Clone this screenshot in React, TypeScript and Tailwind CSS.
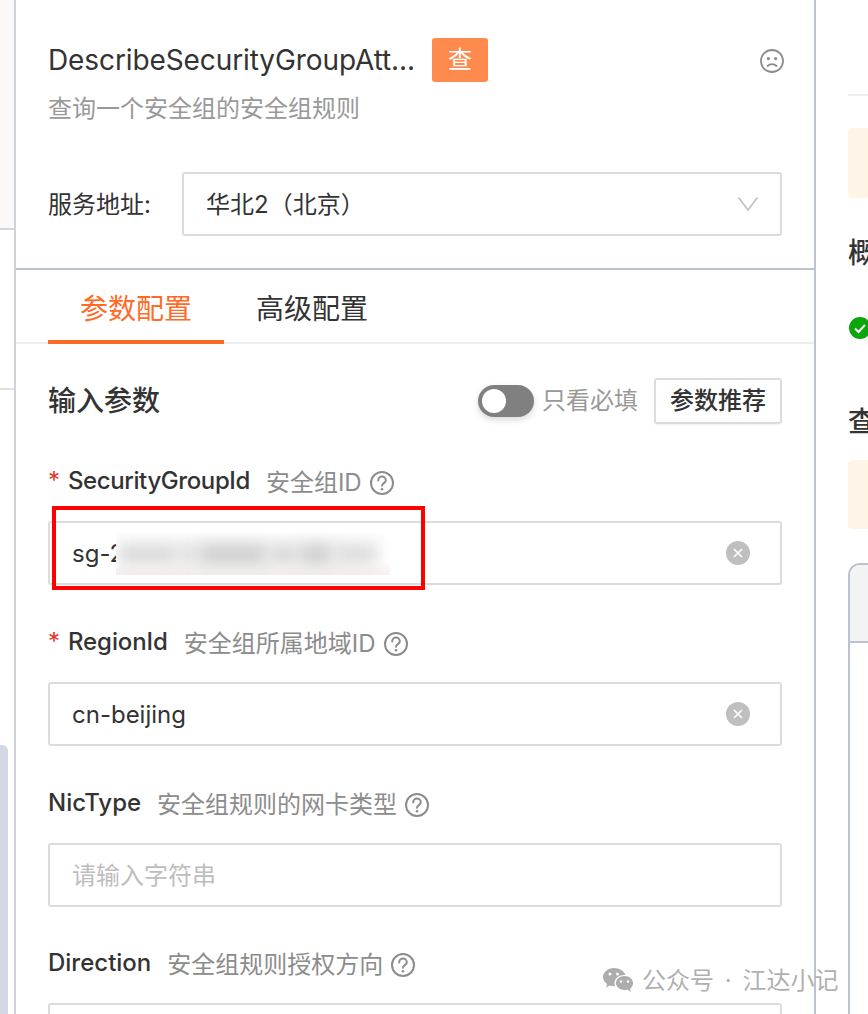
const font = "[font-family:Inter,'Noto_Sans_CJK_SC',sans-serif]";

function HelpIcon() {
  return (
    <svg width="24" height="24" viewBox="0 0 24 24" fill="none" stroke="#8c8c8c" strokeWidth="2" className="shrink-0">
      <circle cx="12" cy="12" r="11" />
      <path d="M8.200 9.400a3.800 3.800 0 0 1 7.600 0c0 2.600-3.800 2.800-3.800 5.400" strokeLinecap="round" />
      <circle cx="12" cy="18.300" r="1.300" fill="#8c8c8c" stroke="none" />
    </svg>
  );
}

function ClearIcon() {
  return (
    <svg width="24" height="24" viewBox="0 0 24 24" className="shrink-0">
      <circle cx="12" cy="12" r="12" fill="#bfbfbf" />
      <path d="M8 8l8 8M16 8l-8 8" stroke="#fff" strokeWidth="1.6" />
    </svg>
  );
}

function Field({ name, desc, required, value, placeholder, blurred, clear, top, nameClass }: any) {
  return (
    <div className={top}>
      <div className="flex h-[40px] items-center">
        {required && <span className="w-[20px] text-[24px] leading-[30px] text-[#e5352b]">*</span>}
        <span className={`text-[24px] font-medium text-[#333] ${nameClass ?? ""}`}>{name}</span>
        <span className="ml-[16px] pt-[3px] text-[24px] text-[#8c8c8c]">{desc}</span>
        <span className="ml-[8px] flex pt-[3px]">
          <HelpIcon />
        </span>
      </div>
      <div className="mt-[20px] flex h-[64px] items-center justify-between rounded-[3px] border-2 border-[#dcdcdc] pl-[22px] pr-[30px]">
        <div className="flex items-center pt-[2px] text-[24px] text-[#333]">
          {value && <span>{value}</span>}
          {placeholder && <span className="text-[#bdbdbd]">{placeholder}</span>}
          {blurred && (
            <div className="-my-[2px] -ml-[8px] flex h-[42px] w-[274px] items-center overflow-hidden bg-[linear-gradient(#ffffff_70%,#f8eeee)] pl-[2px]">
              <div className="h-[22px] w-[60px] bg-[#dadada] blur-[8px]" />
              <div className="h-[22px] w-[20px] bg-[#dedede] blur-[8px]" />
              <div className="h-[24px] w-[70px] bg-[#d0d0d0] blur-[8px]" />
              <div className="h-[22px] w-[30px] bg-[#d8d8d8] blur-[8px]" />
              <div className="h-[24px] w-[36px] bg-[#d0d0d0] blur-[8px]" />
              <div className="h-[22px] w-[44px] bg-[#dcdcdc] blur-[8px]" />
            </div>
          )}
        </div>
        {clear && <ClearIcon />}
      </div>
    </div>
  );
}

export default function App() {
  return (
    <div className={`relative flex h-[1014px] w-[868px] overflow-hidden bg-white ${font}`}>
      {/* left sidebar sliver */}
      <div className="flex w-[16px] shrink-0 flex-col border-r-2 border-[#cfd2d6]">
        <div className="h-[230px] border-b-2 border-[#d4d6da] bg-[#fbf8fa]" />
        <div className="h-[160px] border-b-2 border-[#e0e0e0]" />
        <div className="mt-[355px] h-[269px] w-[8px] rounded-tr-[6px] bg-[#d3d7e3]" />
      </div>

      {/* center panel */}
      <div className="flex w-[800px] shrink-0 flex-col border-r-2 border-[#bcc3cc]">
        <div className="h-[270px] shrink-0 border-b-2 border-[#bcc3cc] px-[32px] pt-[38px]">
          <div className="flex h-[44px] items-center">
            <span className="w-[384px] whitespace-nowrap text-[28px] tracking-[-0.1px] text-[#333]">
              DescribeSecurityGroupAtt...
            </span>
            <span className="flex h-[44px] w-[56px] items-center justify-center rounded-[3px] bg-[#ff8a4d] text-[24px] text-white">
              查
            </span>
            <svg width="24" height="24" viewBox="0 0 24 24" fill="none" stroke="#8c8c8c" strokeWidth="1.8" className="-mr-[2px] ml-auto mt-[2px]">
              <circle cx="12" cy="12" r="11" />
              <circle cx="8.400" cy="9.600" r="1.600" fill="#8c8c8c" stroke="none" />
              <circle cx="15.600" cy="9.600" r="1.600" fill="#8c8c8c" stroke="none" />
              <path d="M7.500 17c2.500-2.400 6.500-2.400 9 0" strokeLinecap="round" />
            </svg>
          </div>
          <div className="mt-[9px] text-[24px] leading-[36px] text-[#999]">查询一个安全组的安全组规则</div>
          <div className="mt-[45px] flex items-center">
            <span className="w-[134px] pt-[2px] text-[24px] text-[#333]">服务地址:</span>
            <div className="flex h-[64px] flex-1 items-center justify-between rounded-[3px] border-2 border-[#dcdcdc] pl-[22px] pr-[22px]">
              <span className="pt-[2px] text-[24px] text-[#333]">华北2（北京）</span>
              <svg width="20" height="14" viewBox="0 0 20 14" fill="none" stroke="#c4c4c4" strokeWidth="1.8">
                <path d="M0.500 0.500L10 13L19.500 0.500" />
              </svg>
            </div>
          </div>
        </div>

        <div className="flex h-[74px] shrink-0 border-b-2 border-[#eeeeee] px-[32px]">
          <div className="-mb-[2px] flex w-[176px] items-center justify-center border-b-4 border-[#ff6a26] pt-[8px] text-[28px] text-[#ff6a26]">
            参数配置
          </div>
          <div className="ml-[32px] flex items-center pt-[6px] text-[28px] text-[#333]">高级配置</div>
        </div>

        <div className="px-[32px] pt-[34px]">
          <div className="flex h-[46px] items-center">
            <span className="text-[28px] font-medium text-[#333]">输入参数</span>
            <div className="relative ml-auto h-[32px] w-[56px] rounded-full bg-[#808080] shadow-[0_3px_6px_rgba(0,0,0,0.15)]">
              <div className="absolute left-[4px] top-[4px] h-[24px] w-[24px] rounded-full bg-white" />
            </div>
            <span className="ml-[8px] text-[24px] text-[#999]">只看必填</span>
            <span className="ml-[16px] flex h-[46px] w-[128px] items-center justify-center rounded-[3px] border-2 border-[#dcdcdc] text-[24px] font-medium text-[#333] shadow-[0_1px_2px_rgba(0,0,0,0.06)]">
              参数推荐
            </span>
          </div>

          <Field top="mt-[37px]" name="SecurityGroupId" nameClass="tracking-[-0.4px]" desc="安全组ID" required value="sg-2" blurred clear />
          <Field top="mt-[37px]" name="RegionId" nameClass="tracking-[-0.1px]" desc="安全组所属地域ID" required value="cn-beijing" clear />
          <Field top="mt-[37px]" name="NicType" desc="安全组规则的网卡类型" placeholder="请输入字符串" />
          <Field top="mt-[36px]" name="Direction" desc="安全组规则授权方向" />
        </div>
      </div>

      {/* right panel */}
      <div className="flex min-w-0 flex-1 flex-col pl-[32px]">
        <div className="h-[96px] shrink-0 border-b-2 border-[#eeeeee]" />
        <div className="mt-[32px] h-[70px] shrink-0 rounded-l-[4px] bg-[#fef5e6]" />
        <div className="mt-[34px] h-[42px] overflow-hidden text-[28px] font-medium leading-[42px] text-[#333]">概览</div>
        <div className="mt-[43px] ml-[1px] h-[22px] w-[19px] shrink-0 overflow-hidden">
          <svg width="22" height="22" viewBox="0 0 22 22">
            <circle cx="11" cy="11" r="11" fill="#0aa60a" />
            <path d="M6 11.500l3.500 3.500 6.500-7" fill="none" stroke="#fff" strokeWidth="2" />
          </svg>
        </div>
        <div className="mt-[62px] h-[42px] overflow-hidden text-[28px] font-medium leading-[42px] text-[#333]">查询</div>
        <div className="mt-[17px] h-[69px] shrink-0 rounded-l-[4px] bg-[#fef5e6]" />
        <div className="mt-[34px] flex-1 -mr-[20px] rounded-tl-[12px] border-l-2 border-t-2 border-[#bcc3cc]">
          <div className="h-[78px] rounded-tl-[10px] border-b-2 border-[#bcc3cc] bg-[#f3f3f5]" />
        </div>
      </div>

      {/* watermark over the page */}
      <div className="absolute left-[602px] top-[963px] flex items-center gap-[8px] text-[24px] text-[#8c8c8c]/70 [word-spacing:4px]">
        <svg width="32" height="28" viewBox="0 0 32 28">
          <path fill="#adadad" d="M12 1C5.900 1 1 5 1 10c0 2.900 1.600 5.300 4.100 7L4 20.500l4-2.100c1.300.4 2.600.6 4 .6h1c-.3-.9-.5-1.800-.5-2.800C12.500 11.300 17 8 22.400 8c.3 0 .6 0 .9 0C22.200 4 17.500 1 12 1z" />
          <path fill="#adadad" d="M31 16c0-4.100-4-7-8.500-7S14 11.900 14 16s4 7 8.500 7c1 0 2-.1 2.900-.5L29 25l-.9-3.100C30 20.300 31 18.300 31 16z" />
          <circle cx="8" cy="7" r="1.500" fill="#fff" />
          <circle cx="15.500" cy="7" r="1.500" fill="#fff" />
          <circle cx="19" cy="14.500" r="1.300" fill="#fff" />
          <circle cx="26" cy="14.500" r="1.300" fill="#fff" />
        </svg>
        <span>公众号 · 江达小记</span>
      </div>

      {/* annotation box */}
      <div className="absolute left-[52px] top-[506px] h-[84px] w-[373px] border-4 border-[#ff0000]" />
    </div>
  );
}
